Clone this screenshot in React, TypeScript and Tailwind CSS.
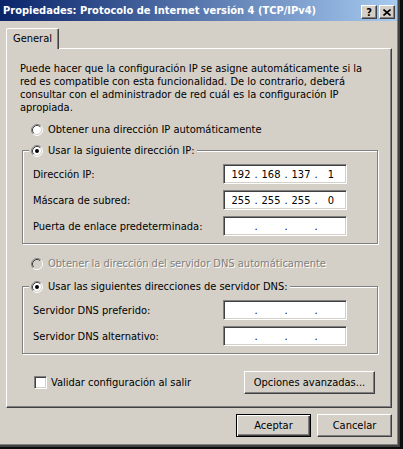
import React, { Fragment } from "react";

const sunken =
  "border border-t-[#808080] border-l-[#808080] border-r-white border-b-white shadow-[inset_1px_1px_0_#404040,inset_-1px_-1px_0_#d4d0c8] bg-white";
const raised =
  "border border-t-white border-l-white border-r-[#404040] border-b-[#404040] shadow-[inset_-1px_-1px_0_#808080] bg-[#d4d0c8]";

function Radio({ checked, disabled }: { checked?: boolean; disabled?: boolean }) {
  return (
    <svg width="12" height="12" viewBox="0 0 12 12" className="shrink-0 block">
      <circle cx="6" cy="6" r="5" fill={disabled ? "#d4d0c8" : "#ffffff"} />
      <path d="M2.11 9.89A5.5 5.5 0 0 1 9.89 2.11" fill="none" stroke="#808080" />
      <path d="M9.89 2.11A5.5 5.5 0 0 1 2.11 9.89" fill="none" stroke="#ffffff" />
      <path d="M2.82 9.18A4.5 4.5 0 0 1 9.18 2.82" fill="none" stroke="#404040" />
      <path d="M9.18 2.82A4.5 4.5 0 0 1 2.82 9.18" fill="none" stroke="#d4d0c8" />
      {checked && <circle cx="6" cy="6" r="2" fill="#000000" />}
    </svg>
  );
}

function IpField({ parts }: { parts?: string[] }) {
  const p = parts ?? ["", "", "", ""];
  return (
    <div className={`w-[124px] h-[20px] flex items-center pl-[4px] ${sunken}`}>
      {p.map((v, i) => (
        <Fragment key={i}>
          <span className="w-[26px] text-center leading-[13px]">{v}</span>
          {i < 3 && <span className="w-[4px] text-center leading-[13px]">.</span>}
        </Fragment>
      ))}
    </div>
  );
}

function Row({ label, parts }: { label: string; parts?: string[] }) {
  return (
    <div className="flex items-center h-[20px]">
      <span className="w-[190px] whitespace-nowrap leading-[13px]">{label}</span>
      <IpField parts={parts} />
    </div>
  );
}

function Group({ legend, children }: { legend: string; children: React.ReactNode }) {
  return (
    <fieldset className="w-[356px] ml-[2px] border border-[#808080] shadow-[1px_1px_0_#ffffff,inset_1px_1px_0_#ffffff] pl-[6px] pr-0 pt-[7px] pb-[7px] min-w-0">
      <legend className="px-[2px] bg-[#d4d0c8]">
        <div className="flex items-center gap-[5px] h-[13px]">
          <Radio checked />
          <span className="whitespace-nowrap leading-[13px]">{legend}</span>
        </div>
      </legend>
      <div className="pl-[4px] flex flex-col gap-[6px]">{children}</div>
    </fieldset>
  );
}

export default function App() {
  return (
    <div className="w-[403px] h-[449px] bg-[#0c0c0c] overflow-hidden font-['DejaVu_Sans_Condensed','DejaVu_Sans',sans-serif] [font-stretch:condensed] text-[11px] leading-[13px] text-black">
      <div className="w-[400px] h-[447px] bg-[#d4d0c8] flex flex-col border-r-2 border-b-2 border-r-[#404040] border-b-[#404040] shadow-[inset_-1px_-1px_0_#808080]">
        {/* Title bar */}
        <div className="h-[21px] w-[397px] flex items-start pl-[3px] pr-[2px] bg-[linear-gradient(to_right,#0a246a,#a6caf0)]">
          <span className="pt-[4px] font-bold text-white whitespace-nowrap leading-[13px]">
            Propiedades: Protocolo de Internet versión 4 (TCP/IPv4)
          </span>
          <div className="ml-auto mt-[5px] flex gap-[1px]">
            <div className={`w-[16px] h-[14px] flex items-center justify-center font-bold text-[11px] leading-[11px] ${raised}`}>
              ?
            </div>
            <div className={`w-[16px] h-[14px] flex items-center justify-center ml-[1px] ${raised}`}>
              <svg width="8" height="7" viewBox="0 0 8 7">
                <path d="M0.5 0.5L7.5 6.5M7.5 0.5L0.5 6.5" stroke="#000" strokeWidth="1.6" fill="none" />
              </svg>
            </div>
          </div>
        </div>

        {/* Body */}
        <div className="pl-[6px] pt-[7px] flex flex-col">
          {/* Tab */}
          <div className="relative z-10 -mb-[1px] w-[53px] h-[21px] flex items-center justify-center pb-[1px] bg-[#d4d0c8] border-t border-l border-r border-t-white border-l-white border-r-[#404040] shadow-[inset_-1px_0_0_#808080] rounded-t-[2px]">
            <span className="leading-[13px]">General</span>
          </div>

          {/* Panel */}
          <div className="w-[386px] h-[360px] pt-[13px] pl-[13px] flex flex-col border border-t-white border-l-white border-r-[#404040] border-b-[#404040] shadow-[inset_-1px_-1px_0_#808080]">
            <div className="whitespace-nowrap">
              <div>Puede hacer que la configuración IP se asigne automáticamente si la</div>
              <div>red es compatible con esta funcionalidad. De lo contrario, deberá</div>
              <div>consultar con el administrador de red cuál es la configuración IP</div>
              <div>apropiada.</div>
            </div>

            <div className="mt-[9px] ml-[11px] flex items-center gap-[5px] h-[13px]">
              <Radio />
              <span className="whitespace-nowrap">Obtener una dirección IP automáticamente</span>
            </div>

            <div className="mt-[8px]">
              <Group legend="Usar la siguiente dirección IP:">
                <Row label="Dirección IP:" parts={["192", "168", "137", "1"]} />
                <Row label="Máscara de subred:" parts={["255", "255", "255", "0"]} />
                <Row label="Puerta de enlace predeterminada:" />
              </Group>
            </div>

            <div className="mt-[13px] ml-[11px] flex items-center gap-[5px] h-[13px]">
              <Radio disabled />
              <span className="whitespace-nowrap text-[#808080] [text-shadow:1px_1px_0_#ffffff]">
                Obtener la dirección del servidor DNS automáticamente
              </span>
            </div>

            <div className="mt-[10px]">
              <Group legend="Usar las siguientes direcciones de servidor DNS:">
                <Row label="Servidor DNS preferido:" />
                <Row label="Servidor DNS alternativo:" />
              </Group>
            </div>

            <div className="mt-[17px] w-[355px] h-[23px] flex items-center">
              <div className={`ml-[14px] w-[13px] h-[13px] ${sunken}`} />
              <span className="ml-[4px] whitespace-nowrap">Validar configuración al salir</span>
              <div className={`ml-auto w-[131px] h-[23px] flex items-center justify-center ${raised}`}>
                <span className="whitespace-nowrap">Opciones avanzadas...</span>
              </div>
            </div>
          </div>

          {/* Bottom buttons */}
          <div className="mt-[6px] w-[386px] flex justify-end gap-[6px]">
            <div className="w-[75px] h-[23px] flex items-center justify-center bg-[#d4d0c8] border border-black shadow-[inset_1px_1px_0_#ffffff,inset_-1px_-1px_0_#404040,inset_-2px_-2px_0_#808080]">
              Aceptar
            </div>
            <div className={`w-[75px] h-[23px] flex items-center justify-center ${raised}`}>Cancelar</div>
          </div>
        </div>
      </div>
    </div>
  );
}
